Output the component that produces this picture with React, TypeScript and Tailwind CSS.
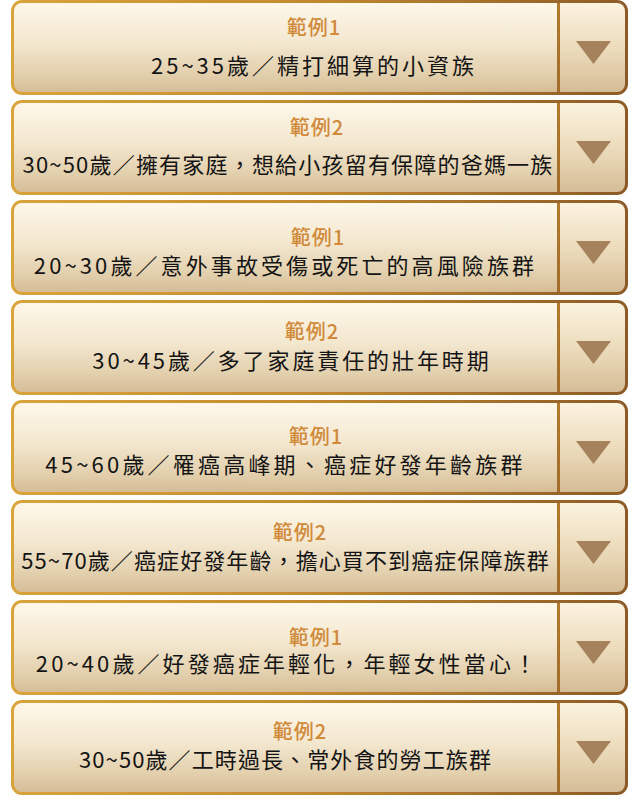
import React from "react";

type Item = {
  title: string;
  text: string;
  pt: string;
  mt: string;
  tShift: string;
  xShift: string;
  track: string;
};

const items: Item[] = [
  { title: "範例1", text: "25~35歲／精打細算的小資族", pt: "pt-[15px]", mt: "mt-[17px]", tShift: "pl-[57px]", xShift: "pl-[57px]", track: "tracking-[3px]" },
  { title: "範例2", text: "30~50歲／擁有家庭，想給小孩留有保障的爸媽一族", pt: "pt-[15px]", mt: "mt-[16px]", tShift: "pl-[63px]", xShift: "pl-[5px]", track: "tracking-[1.2px]" },
  { title: "範例1", text: "20~30歲／意外事故受傷或死亡的高風險族群", pt: "pt-[25px]", mt: "mt-[7px]", tShift: "pl-[65px]", xShift: "pl-[0px]", track: "tracking-[3.1px]" },
  { title: "範例2", text: "30~45歲／多了家庭責任的壯年時期", pt: "pt-[19px]", mt: "mt-[8px]", tShift: "pl-[53px]", xShift: "pl-[13px]", track: "tracking-[2.9px]" },
  { title: "範例1", text: "45~60歲／罹癌高峰期、癌症好發年齡族群", pt: "pt-[24px]", mt: "mt-[7px]", tShift: "pl-[61px]", xShift: "pl-[0px]", track: "tracking-[3.2px]" },
  { title: "範例2", text: "55~70歲／癌症好發年齡，擔心買不到癌症保障族群", pt: "pt-[20px]", mt: "mt-[7px]", tShift: "pl-[29px]", xShift: "pl-[0px]", track: "tracking-[1.1px]" },
  { title: "範例1", text: "20~40歲／好發癌症年輕化，年輕女性當心！", pt: "pt-[25px]", mt: "mt-[5px]", tShift: "pl-[61px]", xShift: "pl-[4px]", track: "tracking-[3.1px]" },
  { title: "範例2", text: "30~50歲／工時過長、常外食的勞工族群", pt: "pt-[19px]", mt: "mt-[7px]", tShift: "pl-[29px]", xShift: "pl-[0px]", track: "tracking-[1.1px]" },
];

function Card({ item }: { item: Item }) {
  return (
    <div className="h-[95px] rounded-[11px] p-[3px] bg-[linear-gradient(90deg,#d9a43a_0%,#c48d2f_45%,#a8732c_75%,#8c5a26_100%)]">
      <div className="flex h-full overflow-hidden rounded-[8px]">
        <div className={`flex-1 flex flex-col ${item.pt} bg-[linear-gradient(180deg,#fef8ea_0%,#f3e7cf_45%,#e2cfac_80%,#d5bd96_100%)]`}>
          <div className={`text-center ${item.tShift} text-[20px] leading-[18px] tracking-[1px] text-[#d08a3a] font-medium`}>
            {item.title}
          </div>
          <div className={`${item.mt} text-center ${item.xShift} ${item.track} whitespace-nowrap text-[22px] leading-[22px] text-[#141414]`}>
            {item.text}
          </div>
        </div>
        <div className="w-[3px] bg-[linear-gradient(180deg,#b27a2c_0%,#a26c2a_100%)]" />
        <div className="w-[65px] flex items-center justify-center bg-[linear-gradient(180deg,#fbf2e0_0%,#ecdcbc_50%,#d5bd96_100%)]">
          <svg width="35" height="23" viewBox="0 0 35 23" className="ml-[2px] mt-[9px]">
            <polygon points="0,0 35,0 17.5,23" fill="#a6825c" />
          </svg>
        </div>
      </div>
    </div>
  );
}

export default function App() {
  return (
    <div
      className="w-[640px] h-[800px] bg-white pl-[11px] pr-[12px] flex flex-col gap-[5px]"
      style={{ fontFamily: '"Noto Sans CJK TC", "Noto Sans", sans-serif' }}
    >
      {items.map((it, i) => (
        <Card key={i} item={it} />
      ))}
    </div>
  );
}
